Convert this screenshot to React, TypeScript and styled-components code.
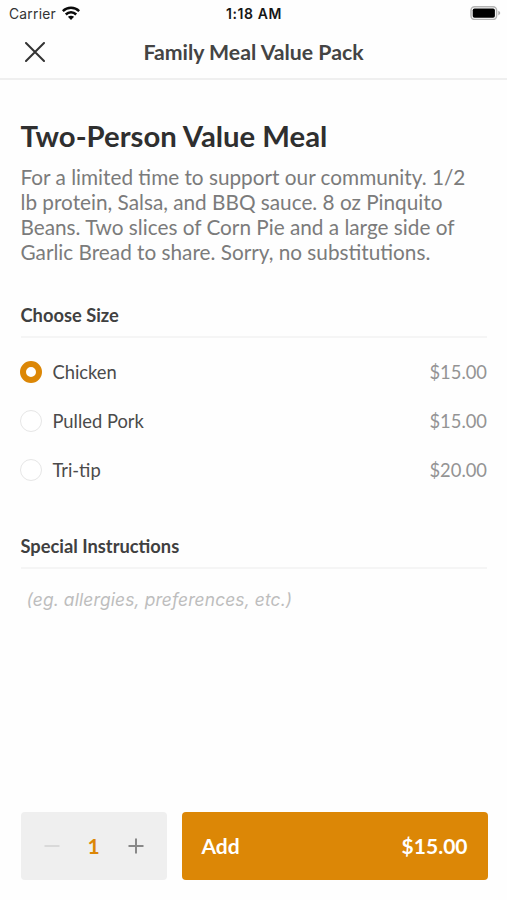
import React, { useState } from "react";
import styled, { createGlobalStyle } from "styled-components";

const ORANGE = "#dc8706";

const GlobalStyle = createGlobalStyle`
  * { box-sizing: border-box; }
  body { margin: 0; background: #fefefe; font-family: Lato, sans-serif; color: #444; }
  button, textarea { font: inherit; border: 0; padding: 0; margin: 0; background: none; }
`;

const Screen = styled.div`
  width: 507px;
  height: 900px;
  display: flex;
  flex-direction: column;
  overflow: hidden;
`;

const StatusBar = styled.div`
  display: grid;
  grid-template-columns: 1fr auto 1fr;
  align-items: center;
  height: 27px;
  padding: 0 6px 0 9px;
  font-family: Inter, sans-serif;
  font-size: 13.5px;
  color: #161616;
`;

const Carrier = styled.div`
  display: flex;
  align-items: center;
  gap: 6px;
  font-size: 13.8px;
  letter-spacing: 0.25px;
  color: #333;
  svg { display: block; margin-top: -2px; }
`;

const Clock = styled.div`
  padding-right: 2px;
  font-weight: 600;
  font-size: 14px;
  letter-spacing: 0.6px;
`;

const BatterySlot = styled.div`
  display: flex;
  justify-content: flex-end;
  padding-bottom: 1px;
`;

const NavBar = styled.header`
  display: grid;
  grid-template-columns: 70px 1fr 70px;
  align-items: center;
  height: 53px;
  padding-bottom: 2px;
  border-bottom: 2px solid #efefef;
`;

const CloseButton = styled.button`
  justify-self: center;
  display: flex;
`;

const NavTitle = styled.h1`
  margin: 0;
  text-align: center;
  font-size: 21.25px;
  line-height: 26px;
  font-weight: 700;
  color: #444;
`;

const Content = styled.main`
  flex: 1;
  padding: 38px 20px 0 20.5px;
`;

const ItemTitle = styled.h2`
  margin: 0;
  font-size: 29.3px;
  line-height: 36px;
  font-weight: 700;
  color: #2f2f2f;
`;

const Description = styled.p`
  margin: 11px 0 0;
  padding-right: 12px;
  font-size: 20.75px;
  line-height: 25px;
  color: #7b7b7b;
`;

const SectionTitle = styled.h3`
  margin: 39px 0 0;
  height: 34px;
  border-bottom: 2px solid #f5f5f5;
  font-size: 18.3px;
  line-height: 22px;
  font-weight: 700;
  color: #404040;
`;

const Options = styled.div`
  padding-top: 9px;
  margin-bottom: 41px;
`;

const Option = styled.label`
  display: flex;
  align-items: center;
  height: 49px;
  font-size: 18.35px;
  color: #4b4b4b;
`;

const Radio = styled.input<{ $on: boolean }>`
  appearance: none;
  width: 22px;
  height: 22px;
  margin: 0 10px 0 -0.1px;
  border-radius: 50%;
  background: #fff;
  border: ${(p) => (p.$on ? `6px solid ${ORANGE}` : "1.5px solid #e6e6e6")};
`;

const Price = styled.span`
  margin-left: auto;
  color: #949494;
`;

const Notes = styled.textarea`
  display: block;
  width: 100%;
  height: 60px;
  padding: 19px 6px 0;
  resize: none;
  outline: none;
  font-family: Inter, sans-serif;
  font-size: 17.35px;
  letter-spacing: 0.15px;
  line-height: 24px;
  font-style: italic;
  &::placeholder { color: #bdbdbd; opacity: 1; }
`;

const Footer = styled.footer`
  display: grid;
  grid-template-columns: 146px 306px;
  gap: 15px;
  height: 108px;
  padding: 20px 20px 20px 20.5px;
`;

const Stepper = styled.div`
  display: flex;
  align-items: center;
  justify-content: space-between;
  padding: 0 23px;
  border-radius: 4px;
  background: #efefef;
`;

const StepButton = styled.button`
  display: flex;
`;

const Quantity = styled.span`
  padding-bottom: 2px;
  font-size: 21px;
  font-weight: 700;
  color: ${ORANGE};
`;

const AddButton = styled.button`
  display: flex;
  align-items: center;
  justify-content: space-between;
  padding: 0 20px 1px;
  border-radius: 4px;
  background: ${ORANGE};
  color: #fff;
  font-size: 21px;
  font-weight: 700;
`;

const WifiIcon = () => (
  <svg width="18" height="14" viewBox="0 0 18 14" fill="none" stroke="#0a0a0a" strokeWidth="2.5">
    <path d="M.8 5.100C5.300.700 12.700.700 17.200 5.100" />
    <path d="M3.800 8.500C6.700 5.600 11.300 5.600 14.200 8.500" />
    <path d="M9 14L5.900 10.800C7.600 9.300 10.400 9.300 12.100 10.800Z" fill="#0a0a0a" stroke="none" />
  </svg>
);

const BatteryIcon = () => (
  <svg width="31" height="14" viewBox="0 0 31 14">
    <rect x="1" y="0.800" width="25.600" height="12.600" rx="3.600" fill="#fff" stroke="#b4b4b4" strokeWidth="1.500" />
    <rect x="2.700" y="2.500" width="22.200" height="9.200" rx="1.800" fill="#000" />
    <path d="M28.300 4.800C30.800 6 30.800 8.200 28.300 9.400Z" fill="#aaa" />
  </svg>
);

const CloseIcon = () => (
  <svg width="20" height="20" viewBox="0 0 20 20" stroke="#333" strokeWidth="2" strokeLinecap="round">
    <path d="M1 1L19 19M19 1L1 19" />
  </svg>
);

const StepIcon = ({ plus = false }: { plus?: boolean }) => (
  <svg width="16" height="16" viewBox="0 0 16 16" stroke={plus ? "#888" : "#d9d9d9"} strokeWidth="2">
    <path d={plus ? "M.5 8H15.500M8 .5V15.500" : "M.5 8H15.500"} />
  </svg>
);

const sizes = [
  { name: "Chicken", price: 15 },
  { name: "Pulled Pork", price: 15 },
  { name: "Tri-tip", price: 20 },
];

export default function App() {
  const [selected, setSelected] = useState(0);
  const [quantity, setQuantity] = useState(1);

  return (
    <Screen>
      <GlobalStyle />
      <StatusBar>
        <Carrier>
          Carrier
          <WifiIcon />
        </Carrier>
        <Clock>1:18 AM</Clock>
        <BatterySlot>
          <BatteryIcon />
        </BatterySlot>
      </StatusBar>
      <NavBar>
        <CloseButton aria-label="Close">
          <CloseIcon />
        </CloseButton>
        <NavTitle>Family Meal Value Pack</NavTitle>
      </NavBar>
      <Content>
        <ItemTitle>Two-Person Value Meal</ItemTitle>
        <Description>
          For a limited time to support our community. 1/2 lb protein, Salsa, and BBQ sauce. 8 oz
          Pinquito Beans. Two slices of Corn Pie and a large side of Garlic Bread to share. Sorry,
          no substitutions.
        </Description>
        <SectionTitle>Choose Size</SectionTitle>
        <Options>
          {sizes.map((size, i) => (
            <Option key={size.name}>
              <Radio
                type="radio"
                name="size"
                $on={i === selected}
                checked={i === selected}
                onChange={() => setSelected(i)}
              />
              {size.name}
              <Price>${size.price.toFixed(2)}</Price>
            </Option>
          ))}
        </Options>
        <SectionTitle>Special Instructions</SectionTitle>
        <Notes placeholder="(eg. allergies, preferences, etc.)" />
      </Content>
      <Footer>
        <Stepper>
          <StepButton aria-label="Decrease" onClick={() => setQuantity(Math.max(1, quantity - 1))}>
            <StepIcon />
          </StepButton>
          <Quantity>{quantity}</Quantity>
          <StepButton aria-label="Increase" onClick={() => setQuantity(quantity + 1)}>
            <StepIcon plus />
          </StepButton>
        </Stepper>
        <AddButton>
          <span>Add</span>
          <span>${(sizes[selected].price * quantity).toFixed(2)}</span>
        </AddButton>
      </Footer>
    </Screen>
  );
}
